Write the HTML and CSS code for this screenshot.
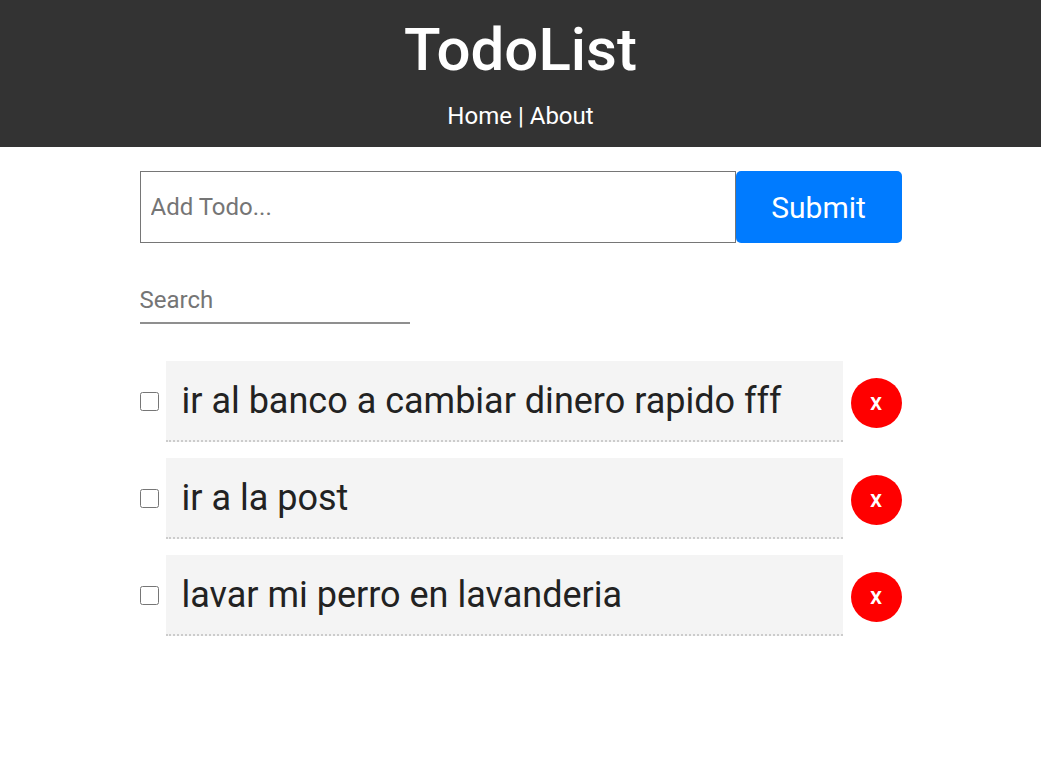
FILE: index.html
```html
<!DOCTYPE html>
<html>
<head>
<meta charset="utf-8">
<link rel="stylesheet" href="styles.css">
</head>
<body>
<header class="header">
  <h1 class="title">TodoList</h1>
  <nav class="nav"><a href="#">Home</a> | <a href="#">About</a></nav>
</header>
<main class="container">
  <form class="add-form">
    <input class="add-input" type="text" placeholder="Add Todo...">
    <button class="submit" type="button">Submit</button>
  </form>
  <input class="search" type="text" placeholder="Search">
  <ul class="list">
    <li class="item">
      <input class="check" type="checkbox">
      <div class="text">ir al banco a cambiar dinero rapido fff</div>
      <button class="del" type="button">x</button>
    </li>
    <li class="item">
      <input class="check" type="checkbox">
      <div class="text">ir a la post</div>
      <button class="del" type="button">x</button>
    </li>
    <li class="item">
      <input class="check" type="checkbox">
      <div class="text">lavar mi perro en lavanderia</div>
      <button class="del" type="button">x</button>
    </li>
  </ul>
</main>
</body>
</html>
```
FILE: styles.css
```css
* { box-sizing: border-box; }
body {
  margin: 0;
  font-family: Roboto, "Liberation Sans", sans-serif;
  background: #fff;
}
.header {
  background: #333333;
  color: #fff;
  text-align: center;
  height: 147px;
  padding-top: 14px;
}
.title {
  margin: 0;
  font-size: 60px;
  font-weight: 500;
  line-height: 72px;
}
.nav {
  font-size: 24px;
  line-height: 30px;
  margin-top: 15px;
}
.nav a { color: #fff; text-decoration: none; }
.container {
  width: 762px;
  margin: 0 auto;
  padding-top: 24px;
}
.add-form {
  display: flex;
  height: 72px;
}
.add-input {
  flex: 1;
  border: 1px solid #767676;
  font-family: inherit;
  font-size: 24px;
  padding: 0 10px;
  color: #333;
}
.add-input::placeholder { color: #757575; }
.submit {
  width: 166px;
  border: none;
  border-radius: 5px;
  background: #007bff;
  color: #fff;
  font-family: inherit;
  font-size: 30px;
}
.search {
  display: block;
  margin-top: 43px;
  width: 270px;
  border: none;
  border-bottom: 2px solid #8f8f8f;
  font-family: inherit;
  font-size: 24px;
  padding: 0 0 8px 0;
  outline: none;
}
.search::placeholder { color: #757575; }
.list {
  list-style: none;
  margin: 37px 0 0 0;
  padding: 0;
  display: flex;
  flex-direction: column;
  gap: 16px;
}
.item {
  display: flex;
  align-items: center;
}
.check {
  width: 19px;
  height: 19px;
  margin: 0 7px 0 0;
}
.text {
  flex: 1;
  background: #f4f4f4;
  border-bottom: 2px dotted #ccc;
  height: 81px;
  display: flex;
  align-items: center;
  padding-left: 16px;
  font-size: 36px;
  color: #222;
}
.del {
  margin: 3px 0 0 8px;
  width: 51px;
  height: 50px;
  border-radius: 50%;
  border: none;
  background: #ff0000;
  color: #fff;
  font-family: inherit;
  font-size: 24px;
  font-weight: 500;
  padding: 0 0 3px 0;
}
```
